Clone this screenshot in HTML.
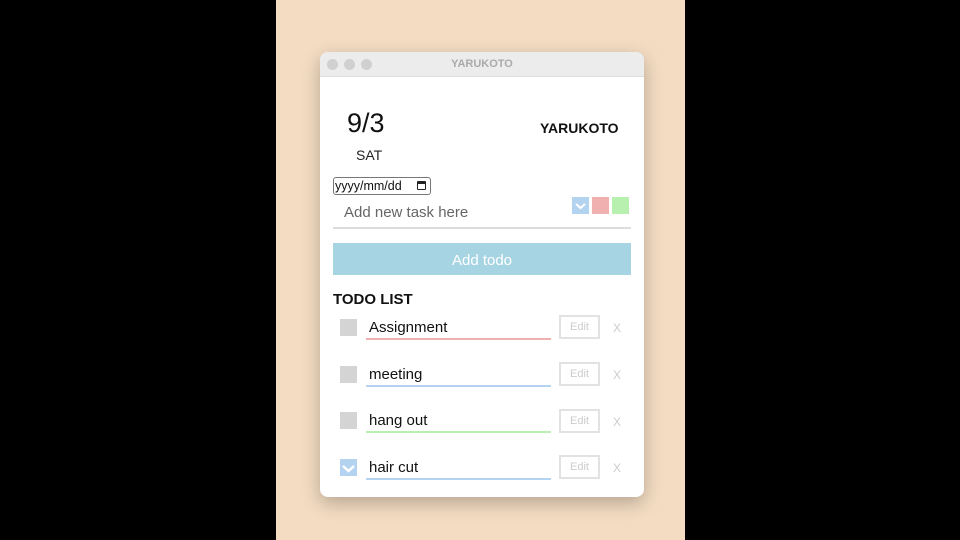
<!DOCTYPE html>
<html><head><meta charset="utf-8"><style>
*{box-sizing:border-box;margin:0;padding:0}
body{width:960px;height:540px;background:#000;position:relative;overflow:hidden;font-family:"Liberation Sans",sans-serif}
.bg{position:absolute;left:276px;top:0;width:409px;height:540px;background:#f3dcc2}
.win{position:absolute;left:320px;top:52px;width:324px;height:445px;background:#fff;border-radius:8px;box-shadow:0 6px 18px rgba(0,0,0,.25);overflow:hidden}
.tb{height:25px;background:#ececec;border-bottom:1px solid #ddd;position:relative}
.dot{position:absolute;top:7px;width:11px;height:11px;border-radius:50%;background:#d0d0d0}
.tt{position:absolute;width:100%;text-align:center;top:6px;font-size:11px;font-weight:bold;color:#aaa}
.a{position:absolute}
.cb{position:absolute;width:17px;height:17px;background:#d4d4d4}
.chk{background:#b4d3f0}
.line{position:absolute;left:46px;width:185px;height:2px}
.edit{position:absolute;left:239px;width:41px;height:24px;border:2px solid #e2e2e2;color:#ccc;font-size:11px;text-align:center;line-height:21px}
.x{position:absolute;left:293px;color:#ccc;font-size:12px}
.txt{position:absolute;left:49px;font-size:15px;color:#111}
</style></head><body>
<div class="bg"></div>
<div class="win">
<div class="tb"><div class="dot" style="left:7px"></div><div class="dot" style="left:24px"></div><div class="dot" style="left:41px"></div><div class="tt">YARUKOTO</div></div>
<div class="a" style="left:27px;top:56px;font-size:27px;color:#111">9/3</div>
<div class="a" style="left:36px;top:95px;font-size:14px;color:#222">SAT</div>
<div class="a" style="left:220px;top:68px;font-size:14px;font-weight:bold;color:#111">YARUKOTO</div>
<div class="a" style="left:13px;top:125px;width:98px;height:18px;border:1px solid #777;border-radius:3px;font-size:12.5px;line-height:16px;padding-left:1px;color:#111">yyyy/mm/dd<span style="position:absolute;right:4px;top:3px;width:9px;height:9px;border:1.5px solid #222;border-top-width:3px;border-radius:1px"></span></div>
<div class="a" style="left:24px;top:152px;font-size:15px;color:#666">Add new task here</div>
<div class="a" style="left:252px;top:145px;width:17px;height:17px;background:#b4d3f0"><svg width="17" height="17"><path d="M4 7l4.5 4 4.5-4" stroke="#fff" stroke-width="2" fill="none"/></svg></div>
<div class="a" style="left:272px;top:145px;width:17px;height:17px;background:#f0b0b0"></div>
<div class="a" style="left:292px;top:145px;width:17px;height:17px;background:#b8f0b0"></div>
<div class="a" style="left:13px;top:175px;width:298px;height:2px;background:#ddd"></div>
<div class="a" style="left:13px;top:191px;width:298px;height:32px;background:#a7d4e3;color:#fff;font-size:15px;text-align:center;line-height:35px">Add todo</div>
<div class="a" style="left:13px;top:239px;font-size:15px;font-weight:bold;color:#111">TODO LIST</div>

<div class="cb" style="left:20px;top:267px"></div><div class="txt" style="top:267px">Assignment</div><div class="line" style="top:286px;background:#f0b0b0"></div><div class="edit" style="top:263px">Edit</div><div class="x" style="top:269px">X</div>
<div class="cb" style="left:20px;top:314px"></div><div class="txt" style="top:314px">meeting</div><div class="line" style="top:333px;background:#b4d3f0"></div><div class="edit" style="top:310px">Edit</div><div class="x" style="top:316px">X</div>
<div class="cb" style="left:20px;top:360px"></div><div class="txt" style="top:360px">hang out</div><div class="line" style="top:379px;background:#b8f0b0"></div><div class="edit" style="top:357px">Edit</div><div class="x" style="top:363px">X</div>
<div class="cb chk" style="left:20px;top:407px"><svg width="17" height="17"><path d="M3 7l5.5 5 5.5-5" stroke="#fff" stroke-width="2.5" fill="none"/></svg></div><div class="txt" style="top:407px">hair cut</div><div class="line" style="top:426px;background:#b4d3f0"></div><div class="edit" style="top:403px">Edit</div><div class="x" style="top:409px">X</div>
</div>
</body></html>
